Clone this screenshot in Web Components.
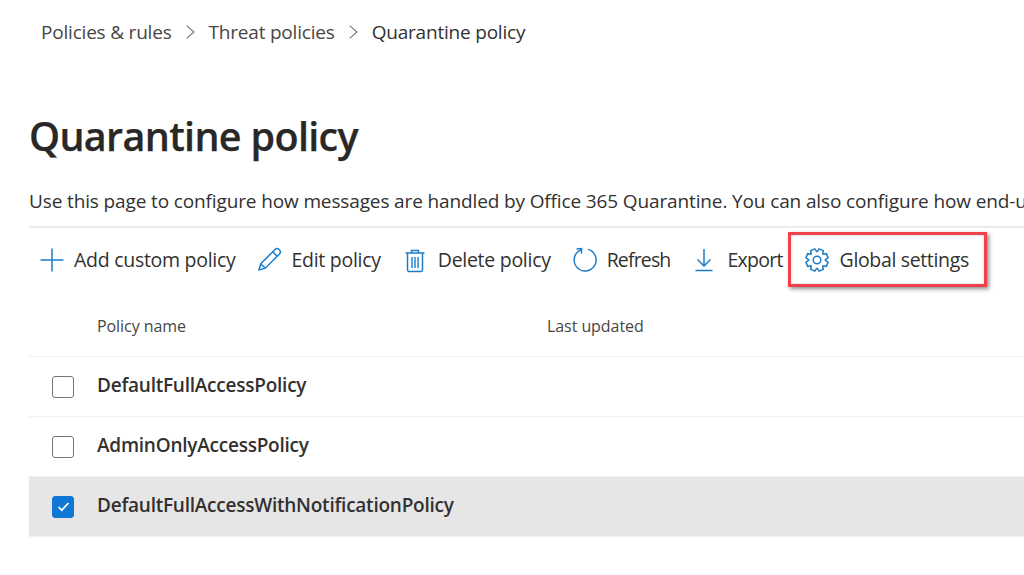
<!DOCTYPE html>
<html><head><meta charset="utf-8"><title>Quarantine policy</title>
<style>
html,body{margin:0;padding:0;background:#fff;overflow:hidden;width:1024px;height:575px}
body{font-family:"Open Sans","Noto Sans",sans-serif;color:#323130}
</style></head><body>
<qp-page></qp-page>
<template id="crumb-t"><style>
:host{display:flex;align-items:center;height:30px;padding:17px 0 0 41px;font-size:19px;letter-spacing:-.2px;color:#484644}
svg{width:9px;height:14px;margin:0 14px;flex:none}
.cur{color:#323130}
</style><span>Policies &amp; rules</span><svg viewBox="0 0 9 14"><path d="M.7.7L8 7 .7 13.300" fill="none" stroke="#777" stroke-width="1.100"/></svg><span>Threat policies</span><svg viewBox="0 0 9 14"><path d="M.7.7L8 7 .7 13.300" fill="none" stroke="#777" stroke-width="1.100"/></svg><span class="cur">Quarantine policy</span></template>

<template id="btn-t"><style>
:host{display:flex;align-items:center;height:50px;font-size:19.5px;letter-spacing:-.28px;color:#323130;white-space:nowrap}
::slotted(svg){width:24px;height:24px;flex:none;margin-right:10px;fill:none;stroke:#1b7dc9;stroke-width:1.500;overflow:visible}
</style><slot name="icon"></slot><slot></slot></template>

<template id="row-t"><style>
:host{display:flex;align-items:center;height:60px;box-sizing:border-box;border-bottom:1px solid #f1f0ef;font-size:19px;font-weight:600;letter-spacing:-.24px;color:#323130}
:host([selected]){background:#e6e6e6;border-bottom-color:#f1f0ef}
.cb{width:22px;height:22px;box-sizing:border-box;border:1.500px solid #77757a;border-radius:3px;margin:0 23px 0 23px;flex:none;background:#fff;display:flex;align-items:center;justify-content:center}
:host([selected]) .cb{background:#0f78d4;border-color:#0f78d4}
svg{display:none;width:13px;height:11px}
:host([selected]) svg{display:block}
.t{padding-bottom:4px}
</style><div class="cb"><svg viewBox="0 0 13 11"><path d="M1.500 6l3.300 3.200L11.500 2" fill="none" stroke="#fff" stroke-width="1.700"/></svg></div><span class="t"><slot></slot></span></template>

<template id="page-t"><style>
:host{display:block;width:1024px;height:575px;overflow:hidden}
h1{font-size:39.5px;font-weight:600;letter-spacing:-.67px;line-height:52px;margin:63px 0 0 29px;color:#292827;-webkit-text-stroke:.25px #292827}
.desc{margin:25px 0 0 29px;font-size:19px;letter-spacing:-.13px;line-height:28px;white-space:nowrap;color:#323130;overflow:hidden}
.rule{height:2px;margin:11px 0 0 29px;background:#ebebeb}
.bar{display:flex;align-items:center;margin:4px 0 0 40px;height:55px}
.bar>*{flex:none}
.a{margin-right:22px}.b{margin-right:22px}.c{margin-right:22px}.d{margin-right:22px;letter-spacing:-.85px}.e{margin-right:5px;letter-spacing:-.75px}
.c svg,.e svg{margin-right:11px}
.box{box-sizing:border-box;height:55px;width:199px;padding-left:14px;border:3px solid #f0414b;box-shadow:2px 2px 4px rgba(0,0,0,.45),inset 0 0 3px rgba(0,0,0,.2);letter-spacing:-.35px}
.box svg{margin-right:11px}
.head{display:flex;align-items:center;height:61px;box-sizing:border-box;margin:9px 0 0 29px;border-bottom:1px solid #f1f0ef;font-size:16px;letter-spacing:-.07px;color:#484644}
.head span:first-child{margin-left:68px;width:450px}
.rows{margin-left:29px}
</style>
<qp-crumbs></qp-crumbs>
<h1>Quarantine policy</h1>
<div class="desc">Use this page to configure how messages are handled by Office 365 Quarantine. You can also configure how end-users interact with them.</div>
<div class="rule"></div>
<div class="bar">
<qp-btn class="a"><svg slot="icon" viewBox="0 0 24 24"><path d="M12 .5v23M.5 12h23"/></svg>Add custom policy</qp-btn>
<qp-btn class="b"><svg slot="icon" viewBox="0 0 24 24"><path transform="translate(0 -1)" d="M1 23l1.800-6.300L16.800 2.700a2.900 2.900 0 0 1 4.500 4.500L7.300 21.200zM2.800 16.700l4.500 4.500M14.700 4.800l4.500 4.500"/></svg>Edit policy</qp-btn>
<qp-btn class="c"><svg slot="icon" viewBox="0 0 24 24"><path d="M2.500 5h19M8.500 5V2.500h7V5M4.500 5v17c0 .8.600 1.400 1.400 1.400h12.200c.8 0 1.400-.6 1.400-1.400V5"/><path d="M9 9v11M12 9v11M15 9v11" stroke-width="2" stroke="#5aa5dd"/></svg>Delete policy</qp-btn>
<qp-btn class="d"><svg slot="icon" viewBox="0 0 24 24"><path d="M15 1.400A11 11 0 1 1 7.800 1.900M3.500 1l5-.5v5"/></svg>Refresh</qp-btn>
<qp-btn class="e"><svg slot="icon" viewBox="0 0 24 24"><path d="M12 1v17M5.500 11.500L12 18l6.500-6.500M3.500 22.500h17"/></svg>Export</qp-btn>
<qp-btn class="box"><svg slot="icon" viewBox="0 0 24 24"><path id="gear"/><circle cx="12" cy="12" r="3.800"/></svg>Global settings</qp-btn>
</div>
<div class="head"><span>Policy name</span><span>Last updated</span></div>
<div class="rows">
<qp-row>DefaultFullAccessPolicy</qp-row>
<qp-row>AdminOnlyAccessPolicy</qp-row>
<qp-row selected>DefaultFullAccessWithNotificationPolicy</qp-row>
</div></template>
<script>
(function(){
  var d='',n=8,R=11.3,r=8.4;
  for(var i=0;i<n;i++){
    var c=(i+.5)*2*Math.PI/n-Math.PI/2,a=[[r,-.36],[R,-.2],[R,.2],[r,.36]];
    a.forEach(function(p,j){d+=((i==0&&j==0)?'M':'L')+(12+p[0]*Math.cos(c+p[1])).toFixed(2)+' '+(12+p[0]*Math.sin(c+p[1])).toFixed(2);});
  }
  document.getElementById('page-t').content.getElementById('gear').setAttribute('d',d+'Z');
})();
function def(name,id){customElements.define(name,class extends HTMLElement{constructor(){super();this.attachShadow({mode:'open'}).appendChild(document.getElementById(id).content.cloneNode(true));}});}
def('qp-crumbs','crumb-t');def('qp-btn','btn-t');def('qp-row','row-t');def('qp-page','page-t');
</script>
</body></html>
